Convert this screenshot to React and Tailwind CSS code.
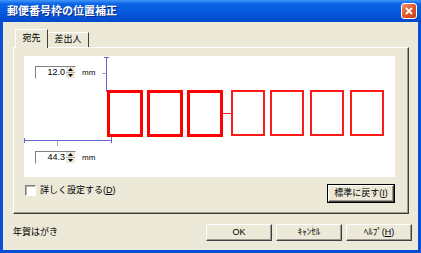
import React from 'react';

const Arrow = ({ up }) => (
  <svg width="5" height="3" viewBox="0 0 5 3">
    <path d={up ? 'M0 3 L2.5 0 L5 3 Z' : 'M0 0 L2.5 3 L5 0 Z'} fill="#000" />
  </svg>
);

const SpinBox = ({ value }) => (
  <div className="flex h-[13px] w-[41px] border border-t-[#808080] border-l-[#808080] border-b-white border-r-white bg-white">
    <div className="flex-1 pr-[1px] text-right text-[9px] leading-[11px] text-black">{value}</div>
    <div className="flex w-[9px] flex-col">
      <div className="flex flex-1 items-center justify-center border-b border-[#b5b3a8] bg-[#ECE9D8]">
        <Arrow up />
      </div>
      <div className="flex flex-1 items-center justify-center bg-[#ECE9D8]">
        <Arrow />
      </div>
    </div>
  </div>
);

const Button = ({ children, width = 'w-[66px]', main }) => (
  <div className={main ? 'border border-black' : ''}>
    <div
      className={`flex h-[17px] ${width} items-center justify-center border border-t-white border-l-white border-b-[#404040] border-r-[#404040] bg-[#ECE9D8] text-[9px] text-black shadow-[inset_-1px_-1px_#9c9a90]`}
    >
      {children}
    </div>
  </div>
);

const Diagram = () => (
  <svg className="absolute inset-0" width="371" height="123" viewBox="0 0 371 123">
    <g stroke="#6868CC" strokeWidth="1">
      <line x1="82.5" y1="1" x2="82.5" y2="36" />
      <line x1="80" y1="1.5" x2="85" y2="1.5" />
      <line x1="0" y1="84.5" x2="87" y2="84.5" />
      <line x1="0.5" y1="82" x2="0.5" y2="87" />
      <line x1="87.5" y1="81" x2="87.5" y2="87" />
    </g>
    <g stroke="#a8a8a8" strokeWidth="1">
      <line x1="78" y1="17.5" x2="82" y2="17.5" />
      <line x1="33.5" y1="85" x2="33.5" y2="90" />
    </g>
    <g fill="none" stroke="#ff0000" strokeWidth="3">
      <rect x="84.5" y="35.5" width="33" height="44" />
      <rect x="124.5" y="35.5" width="33" height="44" />
      <rect x="164.5" y="35.5" width="33" height="44" />
    </g>
    <line x1="199" y1="57.5" x2="208" y2="57.5" stroke="#ff2020" strokeWidth="1" />
    <g fill="none" stroke="#ff1a1a" strokeWidth="2">
      <rect x="208" y="35" width="32" height="44" />
      <rect x="247" y="35" width="32" height="44" />
      <rect x="287" y="35" width="32" height="44" />
      <rect x="327" y="35" width="32" height="44" />
    </g>
  </svg>
);

const App = () => {
  return (
    <div className="flex h-[253px] w-[421px] flex-col bg-[#0A4ED6] font-['Liberation_Sans','Noto_Sans_CJK_JP',sans-serif]">
      <div className="flex h-[22px] items-center justify-between bg-[linear-gradient(#4196fb,#0a62e4_18%,#0558dc_60%,#0449cc)] pl-[7px] pr-[4px]">
        <span className="text-[11px] font-bold text-white [text-shadow:1px_1px_#0b2a8a]">郵便番号枠の位置補正</span>
        <div className="flex h-[16px] w-[16px] items-center justify-center rounded-[3px] border border-white bg-[linear-gradient(135deg,#f0906a,#e05327_55%,#c8401a)]">
          <svg width="8" height="8" viewBox="0 0 8 8">
            <path d="M1 1 L7 7 M7 1 L1 7" stroke="#fff" strokeWidth="1.8" />
          </svg>
        </div>
      </div>

      <div className="mx-[3px] mb-[3px] flex flex-1 flex-col bg-[#ECE9D8] text-black">
        <div className="relative z-10 -mb-[1px] ml-[12px] mt-[7px] flex items-start">
          <div className="flex h-[19px] w-[33px] items-center justify-center border-l border-t border-r border-l-white border-t-white border-r-[#404040] bg-[#ECE9D8] text-[9px]">
            宛先
          </div>
          <div className="mt-[3px] flex h-[15px] w-[41px] items-center justify-center border-t border-r border-t-white border-r-[#404040] text-[9px]">
            差出人
          </div>
        </div>

        <div className="ml-[10px] flex h-[167px] w-[396px] flex-col border border-t-white border-l-white border-b-[#3c3c3c] border-r-[#3c3c3c] pb-[10px] pl-[10px] pt-[8px] shadow-[inset_-1px_-1px_#a09e94]">
          <div className="relative flex h-[123px] w-[371px] flex-col bg-white pl-[11px] pt-[10px]">
            <Diagram />
            <div className="relative flex items-center gap-[6px]">
              <SpinBox value="12.0" />
              <span className="text-[8px] leading-[10px]">mm</span>
            </div>
            <div className="relative mt-[72px] flex items-center gap-[6px]">
              <SpinBox value="44.3" />
              <span className="text-[8px] leading-[10px]">mm</span>
            </div>
          </div>
          <div className="mt-[7px] flex w-[371px] items-start justify-between">
            <div className="ml-[1px] flex items-center gap-[4px]">
              <div className="h-[11px] w-[11px] border border-t-[#808080] border-l-[#808080] border-b-white border-r-white bg-white shadow-[inset_1px_1px_#b8b6ac]" />
              <span className="text-[9px] leading-[12px]">
                詳しく設定する(<span className="underline">D</span>)
              </span>
            </div>
            <Button width="w-[66px]" main>
              標準に戻す(<span className="underline">I</span>)
            </Button>
          </div>
        </div>

        <div className="mt-[10px] flex items-center justify-between pl-[10px] pr-[6px]">
          <span className="text-[9px]">年賀はがき</span>
          <div className="flex gap-[4px]">
            <Button>OK</Button>
            <Button>ｷｬﾝｾﾙ</Button>
            <Button>
              ﾍﾙﾌﾟ(<span className="underline">H</span>)
            </Button>
          </div>
        </div>
      </div>
    </div>
  );
};

export default App;
